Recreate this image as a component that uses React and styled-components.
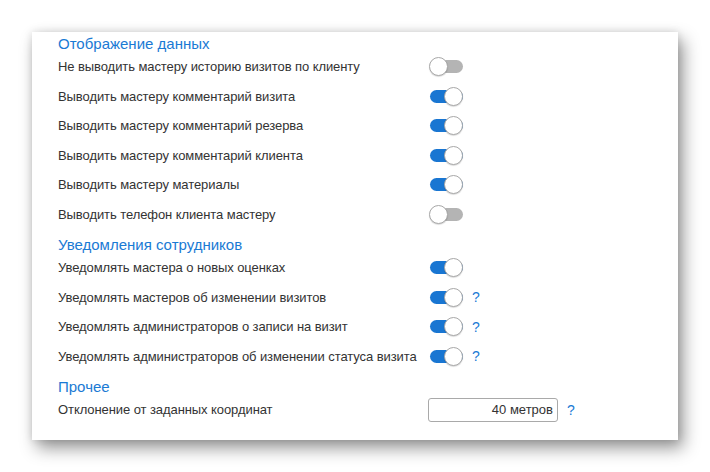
import React from "react";
import styled, { createGlobalStyle } from "styled-components";

const Global = createGlobalStyle`
  html, body { margin: 0; padding: 0; background: #ffffff; }
  body { font-family: "Liberation Sans", Arial, sans-serif; }
`;

const Page = styled.div`
  width: 710px;
  height: 472px;
  padding: 32px 0 0 32px;
  box-sizing: border-box;
`;

const Card = styled.div`
  width: 646px;
  box-sizing: border-box;
  background: #fff;
  padding: 4px 0 15.5px 26px;
  box-shadow: 0 0 8px rgba(0, 0, 0, 0.12), 5px 8px 16px rgba(0, 0, 0, 0.42);
`;

const Heading = styled.div`
  font-size: 15px;
  line-height: 16px;
  height: 16px;
  color: #1a7ad4;
  margin-top: ${(p) => (p.$first ? "0" : "8px")};
`;

const Row = styled.div`
  display: grid;
  grid-template-columns: 362px auto auto;
  align-items: center;
  column-gap: 9px;
  height: 29.5px;
  justify-content: start;
`;

const Label = styled.div`
  font-size: 13px;
  letter-spacing: -0.08px;
  color: #333;
  white-space: nowrap;
`;

const Switch = styled.div`
  position: relative;
  width: 34px;
  height: 19px;
`;

const Track = styled.div`
  position: absolute;
  left: 1px;
  right: 0;
  top: 3px;
  height: 13px;
  border-radius: 6.5px;
  background: ${(p) => (p.$on ? "#1976d2" : "#b4b4b4")};
`;

const Knob = styled.div`
  position: absolute;
  top: 0;
  left: ${(p) => (p.$on ? "15px" : "0")};
  width: 19px;
  height: 19px;
  border-radius: 50%;
  background: #fff;
  border: 1px solid #a8a8a8;
  box-sizing: border-box;
  box-shadow: 0 1px 1px rgba(0, 0, 0, 0.15);
`;

const Help = styled.span`
  font-size: 14px;
  color: #1a7ad4;
  font-weight: normal;
`;

const Input = styled.div`
  width: 130px;
  height: 24px;
  box-sizing: border-box;
  border: 1px solid #a9a9a9;
  border-radius: 3px;
  font-size: 13px;
  color: #333;
  text-align: right;
  padding-right: 4px;
  line-height: 22px;
  margin-top: 1px;
  margin-left: -1px;
`;

const Toggle = ({ on }) => (
  <Switch>
    <Track $on={on} />
    <Knob $on={on} />
  </Switch>
);

const sections = [
  {
    title: "Отображение данных",
    rows: [
      ["Не выводить мастеру историю визитов по клиенту", false, false],
      ["Выводить мастеру комментарий визита", true, false],
      ["Выводить мастеру комментарий резерва", true, false],
      ["Выводить мастеру комментарий клиента", true, false],
      ["Выводить мастеру материалы", true, false],
      ["Выводить телефон клиента мастеру", false, false],
    ],
  },
  {
    title: "Уведомления сотрудников",
    rows: [
      ["Уведомлять мастера о новых оценках", true, false],
      ["Уведомлять мастеров об изменении визитов", true, true],
      ["Уведомлять администраторов о записи на визит", true, true],
      ["Уведомлять администраторов об изменении статуса визита", true, true],
    ],
  },
];

export default function App() {
  return (
    <>
      <Global />
      <Page>
        <Card>
          {sections.map((s, i) => (
            <React.Fragment key={s.title}>
              <Heading $first={i === 0}>{s.title}</Heading>
              {s.rows.map(([label, on, help]) => (
                <Row key={label}>
                  <Label>{label}</Label>
                  <Toggle on={on} />
                  {help ? <Help>?</Help> : <span />}
                </Row>
              ))}
            </React.Fragment>
          ))}
          <Heading>Прочее</Heading>
          <Row>
            <Label>Отклонение от заданных координат</Label>
            <Input>40 метров</Input>
            <Help>?</Help>
          </Row>
        </Card>
      </Page>
    </>
  );
}
